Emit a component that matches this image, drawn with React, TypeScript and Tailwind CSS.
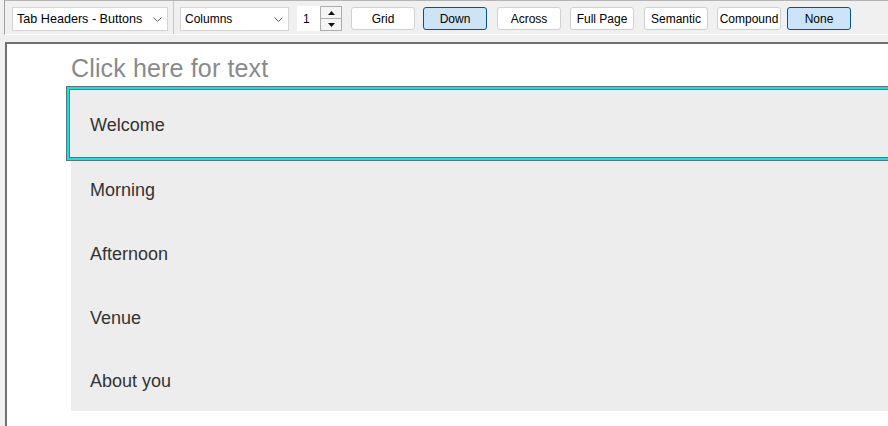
const font = { fontFamily: '"Liberation Sans", Arial, sans-serif' };

function Chevron() {
  return (
    <svg width="9" height="5" viewBox="0 0 9 5" className="shrink-0">
      <path d="M0.5 0.5 L4.5 4.5 L8.5 0.5" fill="none" stroke="#606060" strokeWidth="1" />
    </svg>
  );
}

function Select({ label, width, textSize }: { label: string; width: string; textSize: string }) {
  return (
    <div className={`flex h-[24px] items-center justify-between border border-[#d4d4d4] bg-white pl-[4px] pr-[5px] ${width}`}>
      <span className={`text-black ${textSize} leading-none`}>{label}</span>
      <Chevron />
    </div>
  );
}

function Spinner() {
  return (
    <div className="flex h-[25px] items-stretch">
      <div className="flex w-[23px] items-center bg-white pl-[6px] text-[12px] leading-none text-black">1</div>
      <div className="flex w-[22px] flex-col border border-[#adadad] bg-[#f5f5f5]">
        <div className="flex flex-1 items-center justify-center border-b border-[#adadad]">
          <svg width="7" height="4" viewBox="0 0 7 4">
            <path d="M0 4 L3.5 0 L7 4 Z" fill="#111" />
          </svg>
        </div>
        <div className="flex flex-1 items-center justify-center">
          <svg width="7" height="4" viewBox="0 0 7 4">
            <path d="M0 0 L3.5 4 L7 0 Z" fill="#111" />
          </svg>
        </div>
      </div>
    </div>
  );
}

function ToolButton({ label, active, className }: { label: string; active?: boolean; className: string }) {
  return (
    <div
      className={`flex h-[23px] w-[64px] items-center justify-center rounded-[3px] border text-[12px] leading-none text-black ${
        active ? "border-[#005499] bg-[#cce4f7]" : "border-[#d0d0d0] bg-white"
      } ${className}`}
    >
      {label}
    </div>
  );
}

const tabs = [
  { label: "Welcome", h: "h-[67px]" },
  { label: "Morning", h: "h-[63px]" },
  { label: "Afternoon", h: "h-[64px]" },
  { label: "Venue", h: "h-[64px]" },
  { label: "About you", h: "h-[63px]" },
];

export default function App() {
  return (
    <div className="h-[426px] w-[888px] overflow-hidden bg-[#f0f0f0]" style={font}>
      {/* Toolbar */}
      <div className="ml-[4px] flex h-[35px] items-start border-b border-l border-t border-b-white border-l-[#a0a0a0] border-t-[#b4b4b4]">
        <div className="ml-[7px] mt-[6px]">
          <Select label="Tab Headers - Buttons" width="w-[156px]" textSize="text-[12.6px]" />
        </div>
        <div className="ml-[5px] h-full w-px bg-[#c8c8c8]" />
        <div className="ml-[6px] mt-[6px]">
          <Select label="Columns" width="w-[109px]" textSize="text-[12px]" />
        </div>
        <div className="ml-[8px] mt-[5px]">
          <Spinner />
        </div>
        <div className="mt-[6px] flex">
          <ToolButton label="Grid" className="ml-[9px]" />
          <ToolButton label="Down" active className="ml-[8px]" />
          <ToolButton label="Across" className="ml-[10px]" />
          <ToolButton label="Full Page" className="ml-[9px]" />
          <ToolButton label="Semantic" className="ml-[10px]" />
          <ToolButton label="Compound" className="ml-[9px]" />
          <ToolButton label="None" active className="ml-[6px]" />
        </div>
      </div>

      {/* Design surface */}
      <div className="ml-[5px] mt-[7px] h-[400px] w-[920px] border-l-2 border-t-2 border-[#6f6f6f] bg-white pl-[64px] pt-[10px]">
        <div className="text-[25px] leading-[29px] tracking-[0.15px] text-[#8a8a8a]">Click here for text</div>
        <div className="mt-[7px] w-[860px] bg-[#ededed]">
          {tabs.map((t, i) => (
            <div
              key={t.label}
              className={`flex items-center pl-[19px] pt-[4px] text-[18px] text-[#333333] ${t.h} ${
                i === 0
                  ? "relative z-10 ml-[-1px] shadow-[0_0_0_1px_#6d6d6d,0_0_0_3px_#00eaea,0_0_0_4px_#6d6d6d] bg-[#ededed] pl-[20px]"
                  : ""
              }`}
            >
              {t.label}
            </div>
          ))}
        </div>
      </div>
    </div>
  );
}
